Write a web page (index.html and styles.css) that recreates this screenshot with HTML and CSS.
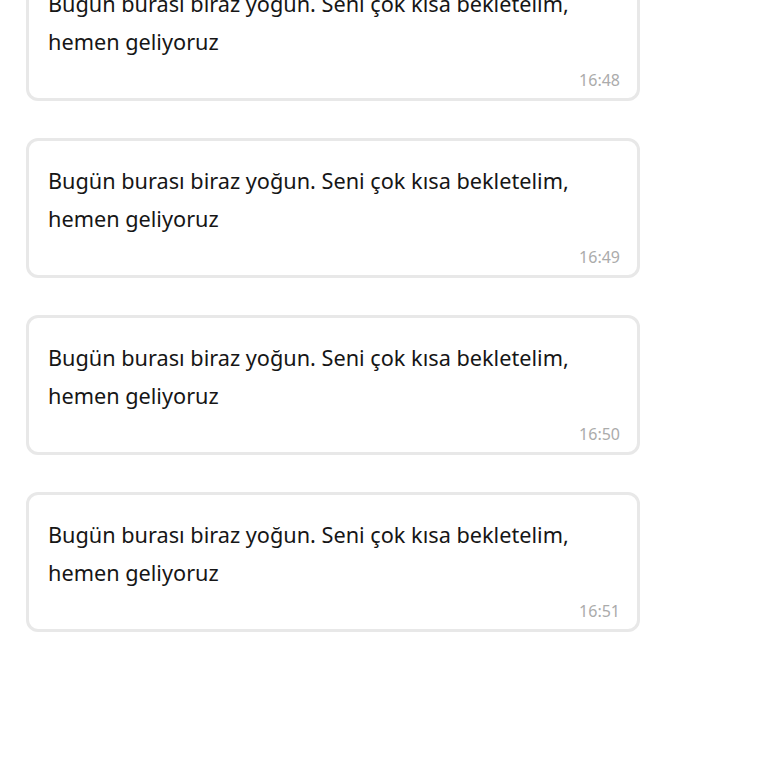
FILE: index.html
```html
<!DOCTYPE html>
<html lang="tr">
<head>
    <meta charset="UTF-8">
    <meta name="viewport" content="width=device-width, initial-scale=1.0">
    <title>Mesajlar</title>
    <link rel="stylesheet" href="styles.css">
</head>
<body>
    <div class="messages">
        <div class="bubble">
            <p class="text">Bugün burası biraz yoğun. Seni çok kısa bekletelim, hemen geliyoruz</p>
            <span class="time">16:48</span>
        </div>
        <div class="bubble">
            <p class="text">Bugün burası biraz yoğun. Seni çok kısa bekletelim, hemen geliyoruz</p>
            <span class="time">16:49</span>
        </div>
        <div class="bubble">
            <p class="text">Bugün burası biraz yoğun. Seni çok kısa bekletelim, hemen geliyoruz</p>
            <span class="time">16:50</span>
        </div>
        <div class="bubble">
            <p class="text">Bugün burası biraz yoğun. Seni çok kısa bekletelim, hemen geliyoruz</p>
            <span class="time">16:51</span>
        </div>
    </div>
</body>
</html>
```

FILE: styles.css
```css
body {
    font-family: 'Noto Sans', sans-serif;
    margin: 0;
    background-color: #fff;
}

.messages {
    display: flex;
    flex-direction: column;
    gap: 37px;
    width: 614px;
    margin-top: -39px;
    margin-left: 26px;
}

.bubble {
    display: flex;
    flex-direction: column;
    border: 3px solid #e8e8e8;
    border-radius: 12px;
    padding: 21px 17px 8px 19px;
    background-color: #fff;
}

.text {
    margin: 0;
    font-size: 21.7px;
    line-height: 38px;
    color: #161616;
    padding-right: 30px;
}

.time {
    align-self: flex-end;
    margin-top: 9px;
    font-size: 16px;
    line-height: 20px;
    color: #ababab;
}
```
